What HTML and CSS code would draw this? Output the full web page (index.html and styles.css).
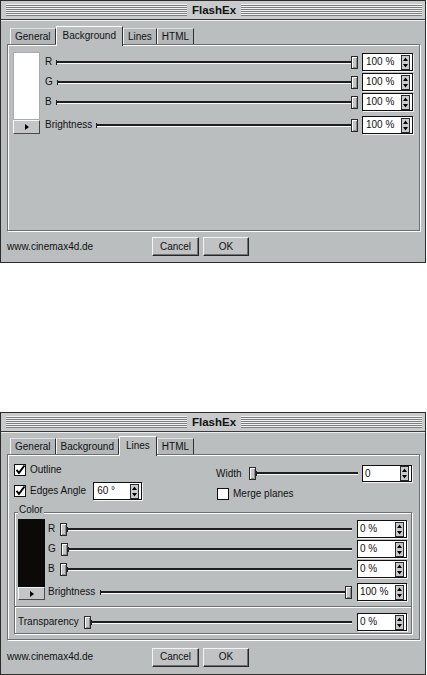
FILE: index.html
```html
<!DOCTYPE html>
<html>
<head>
<meta charset="utf-8">
<title>FlashEx</title>
<link rel="stylesheet" href="styles.css">
</head>
<body>
<div class="page">

  <section class="window win-bg">
    <header class="titlebar"><span class="stripes"></span><span class="title">FlashEx</span><span class="stripes"></span></header>
    <div class="winbody">
      <nav class="tabs">
        <span class="tab">General</span><span class="tab active">Background</span><span class="tab">Lines</span><span class="tab">HTML</span>
      </nav>
      <div class="panel panel-bg">
        <div class="swatch-col">
          <div class="swatch swatch-white"></div>
          <div class="swatch-btn"><svg width="4" height="6" viewBox="0 0 4 6"><path d="M0 0 L4 3 L0 6Z" fill="#000"/></svg></div>
        </div>
        <div class="rows">
          <div class="row"><span class="lbl">R</span><div class="slider"><span class="track"></span><span class="thumb"></span></div><div class="field"><span>100 %</span><svg class="spin" width="9" height="15" viewBox="0 0 9 15"><rect x="0.5" y="0.5" width="8" height="14" fill="#c9cbcc" stroke="#2a2a2a"/><path d="M4.5 2.5 L7 6 H2Z M4.5 12.5 L7 9 H2Z" fill="#000"/></svg></div></div>
          <div class="row"><span class="lbl">G</span><div class="slider"><span class="track"></span><span class="thumb"></span></div><div class="field"><span>100 %</span><svg class="spin" width="9" height="15" viewBox="0 0 9 15"><rect x="0.5" y="0.5" width="8" height="14" fill="#c9cbcc" stroke="#2a2a2a"/><path d="M4.5 2.5 L7 6 H2Z M4.5 12.5 L7 9 H2Z" fill="#000"/></svg></div></div>
          <div class="row"><span class="lbl">B</span><div class="slider"><span class="track"></span><span class="thumb"></span></div><div class="field"><span>100 %</span><svg class="spin" width="9" height="15" viewBox="0 0 9 15"><rect x="0.5" y="0.5" width="8" height="14" fill="#c9cbcc" stroke="#2a2a2a"/><path d="M4.5 2.5 L7 6 H2Z M4.5 12.5 L7 9 H2Z" fill="#000"/></svg></div></div>
          <div class="row row-bright"><span class="lbl">Brightness</span><div class="slider"><span class="track"></span><span class="thumb"></span></div><div class="field"><span>100 %</span><svg class="spin" width="9" height="15" viewBox="0 0 9 15"><rect x="0.5" y="0.5" width="8" height="14" fill="#c9cbcc" stroke="#2a2a2a"/><path d="M4.5 2.5 L7 6 H2Z M4.5 12.5 L7 9 H2Z" fill="#000"/></svg></div></div>
        </div>
      </div>
      <footer class="footer">
        <span class="url">www.cinemax4d.de</span>
        <button class="btn btn-cancel">Cancel</button>
        <button class="btn btn-ok">OK</button>
      </footer>
    </div>
  </section>

  <section class="window win-lines">
    <header class="titlebar"><span class="stripes"></span><span class="title">FlashEx</span><span class="stripes"></span></header>
    <div class="winbody">
      <nav class="tabs">
        <span class="tab">General</span><span class="tab">Background</span><span class="tab active">Lines</span><span class="tab">HTML</span>
      </nav>
      <div class="panel panel-lines">
        <div class="top-grid">
          <div class="col-left">
            <label class="check-row"><svg class="check" width="12" height="12" viewBox="0 0 12 12"><rect x="0.5" y="0.5" width="11" height="11" fill="#fff" stroke="#111"/><path d="M2.5 5.8 L5 8.8 L10.5 1.5" fill="none" stroke="#000" stroke-width="2"/></svg><span>Outline</span></label>
            <div class="edges-row">
              <label class="check-row"><svg class="check" width="12" height="12" viewBox="0 0 12 12"><rect x="0.5" y="0.5" width="11" height="11" fill="#fff" stroke="#111"/><path d="M2.5 5.8 L5 8.8 L10.5 1.5" fill="none" stroke="#000" stroke-width="2"/></svg><span>Edges Angle</span></label>
              <div class="field field-angle"><span>60 °</span><svg class="spin" width="9" height="15" viewBox="0 0 9 15"><rect x="0.5" y="0.5" width="8" height="14" fill="#c9cbcc" stroke="#2a2a2a"/><path d="M4.5 2.5 L7 6 H2Z M4.5 12.5 L7 9 H2Z" fill="#000"/></svg></div>
            </div>
          </div>
          <div class="col-right">
            <div class="row row-width"><span class="lbl">Width</span><div class="slider"><span class="thumb"></span><span class="track"></span></div><div class="field field-sm"><span>0</span><svg class="spin" width="9" height="15" viewBox="0 0 9 15"><rect x="0.5" y="0.5" width="8" height="14" fill="#c9cbcc" stroke="#2a2a2a"/><path d="M4.5 2.5 L7 6 H2Z M4.5 12.5 L7 9 H2Z" fill="#000"/></svg></div></div>
            <label class="check-row merge"><svg class="check" width="12" height="12" viewBox="0 0 12 12"><rect x="0.5" y="0.5" width="11" height="11" fill="#fff" stroke="#111"/></svg><span>Merge planes</span></label>
          </div>
        </div>

        <div class="frame">
          <div class="group">
            <span class="legend">Color</span>
            <div class="group-body">
              <div class="swatch-col">
                <div class="swatch swatch-black"></div>
                <div class="swatch-btn swatch-btn-sm"><svg width="4" height="6" viewBox="0 0 4 6"><path d="M0 0 L4 3 L0 6Z" fill="#000"/></svg></div>
              </div>
              <div class="rows rows-sm">
                <div class="row"><span class="lbl">R</span><div class="slider"><span class="thumb"></span><span class="track"></span></div><div class="field field-sm"><span>0 %</span><svg class="spin" width="9" height="15" viewBox="0 0 9 15"><rect x="0.5" y="0.5" width="8" height="14" fill="#c9cbcc" stroke="#2a2a2a"/><path d="M4.5 2.5 L7 6 H2Z M4.5 12.5 L7 9 H2Z" fill="#000"/></svg></div></div>
                <div class="row"><span class="lbl">G</span><div class="slider"><span class="thumb"></span><span class="track"></span></div><div class="field field-sm"><span>0 %</span><svg class="spin" width="9" height="15" viewBox="0 0 9 15"><rect x="0.5" y="0.5" width="8" height="14" fill="#c9cbcc" stroke="#2a2a2a"/><path d="M4.5 2.5 L7 6 H2Z M4.5 12.5 L7 9 H2Z" fill="#000"/></svg></div></div>
                <div class="row"><span class="lbl">B</span><div class="slider"><span class="thumb"></span><span class="track"></span></div><div class="field field-sm"><span>0 %</span><svg class="spin" width="9" height="15" viewBox="0 0 9 15"><rect x="0.5" y="0.5" width="8" height="14" fill="#c9cbcc" stroke="#2a2a2a"/><path d="M4.5 2.5 L7 6 H2Z M4.5 12.5 L7 9 H2Z" fill="#000"/></svg></div></div>
                <div class="row row-bright"><span class="lbl">Brightness</span><div class="slider"><span class="track"></span><span class="thumb"></span></div><div class="field field-sm"><span>100 %</span><svg class="spin" width="9" height="15" viewBox="0 0 9 15"><rect x="0.5" y="0.5" width="8" height="14" fill="#c9cbcc" stroke="#2a2a2a"/><path d="M4.5 2.5 L7 6 H2Z M4.5 12.5 L7 9 H2Z" fill="#000"/></svg></div></div>
              </div>
            </div>
          </div>
          <div class="group transp">
            <div class="row row-transp"><span class="lbl">Transparency</span><div class="slider"><span class="thumb"></span><span class="track"></span></div><div class="field field-sm"><span>0 %</span><svg class="spin" width="9" height="15" viewBox="0 0 9 15"><rect x="0.5" y="0.5" width="8" height="14" fill="#c9cbcc" stroke="#2a2a2a"/><path d="M4.5 2.5 L7 6 H2Z M4.5 12.5 L7 9 H2Z" fill="#000"/></svg></div></div>
          </div>
        </div>
      </div>
      <footer class="footer">
        <span class="url">www.cinemax4d.de</span>
        <button class="btn btn-cancel">Cancel</button>
        <button class="btn btn-ok">OK</button>
      </footer>
    </div>
  </section>

</div>
</body>
</html>
```

FILE: styles.css
```css
* { box-sizing: border-box; }

html, body {
  margin: 0;
  padding: 0;
  background: #fff;
}

body {
  font-family: "Liberation Sans", Arial, sans-serif;
  font-size: 10px;
  color: #111;
}

.page {
  display: flex;
  flex-direction: column;
  width: 427px;
}

/* ---------- window ---------- */
.window {
  width: 426px;
  height: 263px;
  border: 1px solid #2b2b2b;
  background: #bbbebf;
  display: flex;
  flex-direction: column;
}

.win-lines {
  margin-top: 149px;
}

.titlebar {
  flex: none;
  height: 19px;
  display: flex;
  align-items: center;
  gap: 5px;
  padding: 0 3px 0 5px;
  border-bottom: 1px solid #3a3a3a;
  background: #c8cacb;
}

.stripes {
  flex: 1;
  height: 12px;
  background: repeating-linear-gradient(to bottom, #f2f2f2 0 1px, #7b7d7e 1px 2px);
}

.title {
  font-weight: bold;
  font-size: 11.5px;
  color: #111;
  line-height: 12px;
}

.winbody {
  flex: 1;
  display: flex;
  flex-direction: column;
  padding: 6px 5px 0 6px;
  box-shadow: inset 0 1px 0 #eceeee;
}

.win-lines .winbody {
  padding-top: 4px;
}

/* ---------- tabs ---------- */
.tabs {
  flex: none;
  display: flex;
  align-items: flex-end;
  height: 20px;
  margin: 0 0 -2px 3px;
  position: relative;
  z-index: 1;
}

.tab {
  height: 16px;
  margin-bottom: 2px;
  padding: 0 4px;
  display: flex;
  align-items: center;
  background: #b4b7b8;
  border-top: 1px solid #dfe1e1;
  border-left: 1px solid #f4f4f4;
  border-right: 1px solid #2e2e2e;
  line-height: 12px;
}

.tab.active {
  height: 20px;
  margin: 0;
  padding: 0 6px 2px;
  background: #bbbebf;
  border-top: 1px solid #fff;
  border-left: 1px solid #fff;
  border-right: 1px solid #2e2e2e;
  position: relative;
}

/* ---------- panel ---------- */
.panel {
  flex: none;
  height: 187px;
  border: 1px solid #6c6e6f;
  box-shadow: inset 1px 1px 0 #fff, 1px 1px 0 #fff;
}

.win-lines .panel {
  height: 186px;
}

.panel-bg {
  display: flex;
  align-items: flex-start;
  gap: 5px;
  padding: 7px 6px 0 5px;
}

.swatch-col {
  flex: none;
  width: 27px;
  display: flex;
  flex-direction: column;
}

.swatch {
  height: 68px;
}

.swatch-white {
  background: #fff;
  border: 1px solid #a9abac;
}

.swatch-black {
  background: #0c0a08;
}

.swatch-btn {
  height: 14px;
  display: flex;
  align-items: center;
  justify-content: center;
  background: #c3c5c6;
  border: 1px solid;
  border-color: #f6f6f6 #4a4a4a #4a4a4a #f6f6f6;
}

.swatch-btn-sm {
  height: 13px;
}

.rows {
  flex: 1;
  display: flex;
  flex-direction: column;
  gap: 2px;
  padding-top: 1px;
}

.row {
  height: 18px;
  display: flex;
  align-items: center;
  gap: 4px;
}

.row-bright {
  margin-top: 3px;
}

.lbl {
  flex: none;
  line-height: 12px;
}

/* ---------- slider ---------- */
.slider {
  flex: 1;
  height: 13px;
  display: flex;
  align-items: center;
}

.track {
  flex: 1;
  height: 5px;
  border-left: 1px solid #1e1e1e;
  background: linear-gradient(to bottom, transparent 0 1px, #1e1e1e 1px 3px, #fafafa 3px 4px, transparent 4px);
}

.thumb {
  flex: none;
  width: 7px;
  height: 13px;
  background: #c4c6c7;
  border: 1px solid #2a2a2a;
  box-shadow: inset 1px 1px 0 #fff, inset -1px -1px 0 #8a8c8d;
}

/* ---------- fields ---------- */
.field {
  flex: none;
  width: 51px;
  height: 18px;
  display: flex;
  align-items: center;
  justify-content: space-between;
  padding: 0 2px 0 3px;
  background: #fff;
  border: 1px solid #111;
  box-shadow: 1px 1px 0 #f4f4f4;
  line-height: 12px;
  color: #111;
}

.field-sm {
  width: 50px;
  padding-left: 2px;
}

.spin {
  display: block;
  flex: none;
}

/* ---------- lines panel ---------- */
.panel-lines {
  display: flex;
  flex-direction: column;
  padding: 8px 7px 0 6px;
}

.top-grid {
  display: flex;
}

.col-left {
  flex: none;
  width: 202px;
  display: flex;
  flex-direction: column;
  gap: 6px;
}

.col-right {
  flex: 1;
  display: flex;
  flex-direction: column;
  gap: 5px;
  padding-top: 2px;
}

.check-row {
  height: 13px;
  display: flex;
  align-items: center;
  gap: 4px;
  line-height: 12px;
}

.check {
  display: block;
  flex: none;
}

.merge {
  padding-left: 1px;
}

.edges-row {
  height: 18px;
  display: flex;
  align-items: center;
  gap: 7px;
}

.field-angle {
  width: 49px;
}

.row-width {
  height: 17px;
  gap: 7px;
}

.row-width .field {
  height: 17px;
  margin-left: -3px;
}

/* ---------- color frame ---------- */
.frame {
  margin-top: 12px;
  border: 1px solid #6c6e6f;
  box-shadow: inset 1px 1px 0 #fff, 1px 1px 0 #fff;
}

.legend {
  display: block;
  width: fit-content;
  margin: -9px 0 0 3px;
  padding: 0 1px;
  height: 12px;
  line-height: 12px;
  background: #bbbebf;
}

.group-body {
  display: flex;
  align-items: flex-start;
  gap: 3px;
  padding: 3px 4px 0 3px;
}

.rows-sm {
  padding-top: 1px;
}

.rows-sm .row {
  gap: 5px;
}

.transp {
  margin-top: 5px;
  border-top: 1px solid #6c6e6f;
  box-shadow: inset 0 1px 0 #fff;
  padding: 6px 4px 2px 3px;
}

.row-transp {
  gap: 5px;
}

/* ---------- footer ---------- */
.footer {
  flex: 1;
  display: flex;
  align-items: center;
  gap: 4px;
}

.url {
  flex: none;
  width: 141px;
  line-height: 12px;
}

.btn {
  height: 19px;
  padding: 0;
  font: inherit;
  color: #111;
  background: #c0c2c3;
  border: 1px solid;
  border-color: #f4f4f4 #262626 #262626 #f4f4f4;
  box-shadow: inset -1px -1px 0 #6f7172;
  line-height: 12px;
}

.btn-cancel {
  width: 47px;
}

.btn-ok {
  width: 46px;
}
```
